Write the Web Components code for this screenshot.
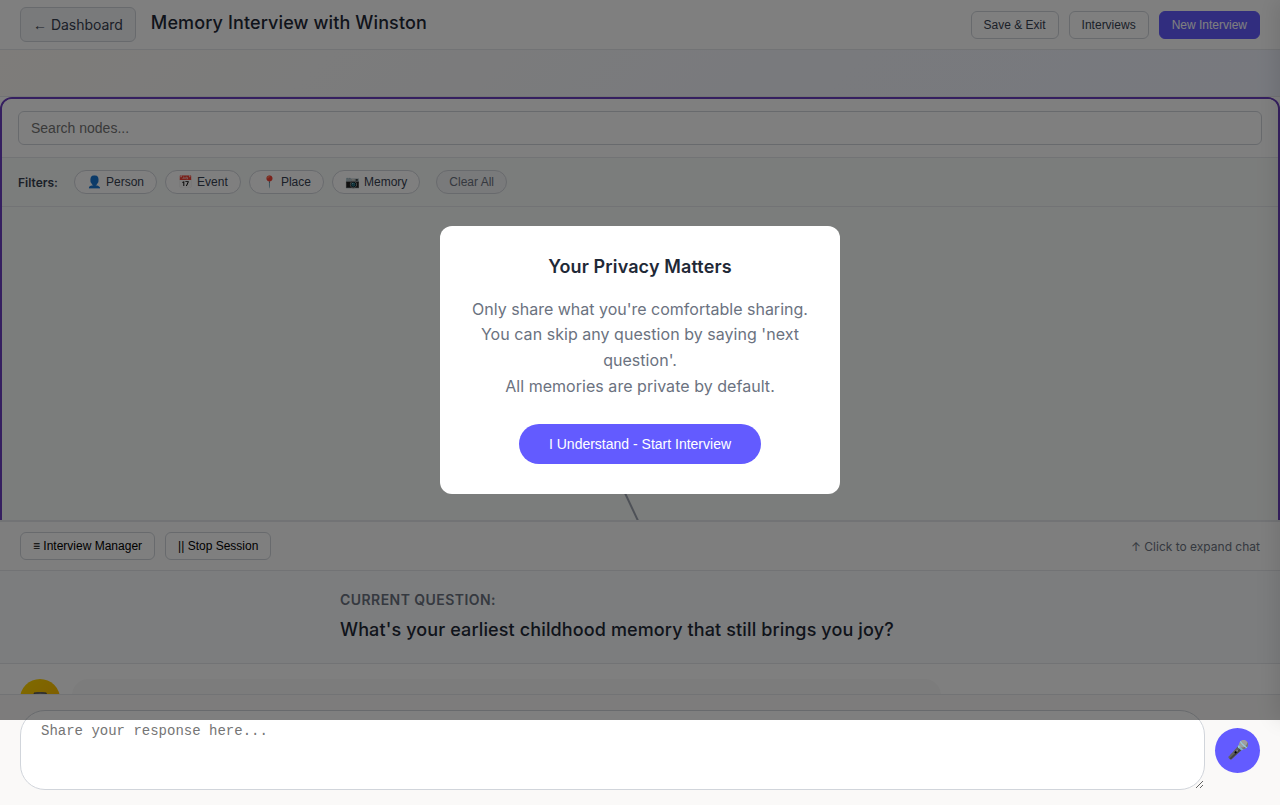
<!DOCTYPE html>
<html lang="en">
<head>
<meta charset="utf-8">
<title>Memory Interview</title>
<style>
html,body{margin:0;padding:0;height:805px;overflow:hidden;background:#faf9f7;font-family:Inter,"Liberation Sans",sans-serif}
</style>
</head>
<body>
<interview-app></interview-app>
<script>
const define = (name, html) => customElements.define(name, class extends HTMLElement {
  constructor() {
    super();
    const t = document.createElement('template');
    t.innerHTML = html;
    this.attachShadow({ mode: 'open' }).append(t.content.cloneNode(true));
  }
});

define('ui-button', `<style>
:host{display:block;flex:none}
button{display:block;box-sizing:border-box;height:28px;margin:0;padding:0 12px;font:12px/14px "Liberation Sans",Arial,sans-serif;color:#374151;background:#fff;border:1px solid #d1d5db;border-radius:6px;white-space:nowrap}
:host([variant=primary]) button{background:#635bff;border-color:#635bff;color:#fff}
:host([variant=plain]) button{color:#000}
:host([variant=back]) button{height:35px;font:14px/17px Inter,"Liberation Sans",sans-serif;letter-spacing:-.03px;background:#f3f4f6}
:host([variant=chip]) button{height:24px;border-radius:12px}
:host([variant=clear]) button{height:24px;border-radius:12px;background:#f3f4f6;color:#6b7280}
:host([variant=pill]) button{height:40px;padding:0 30px;border:0;border-radius:20px;font-size:14px;line-height:16px;background:#635bff;color:#fff}
</style><button><slot></slot></button>`);

define('app-header', `<style>
:host{display:flex;box-sizing:border-box;height:50px;padding:0 20px;align-items:center;justify-content:space-between;background:#fff;border-bottom:1px solid #e5e7eb}
.side{display:flex;gap:10px;align-items:center}
.left{gap:15px}
.arrow{font-family:"Liberation Sans",Arial,sans-serif}
h1{margin:0 0 4px;font-size:18px;line-height:22px;font-weight:500;letter-spacing:.12px;color:#1f2937}
</style>
<div class="side left"><ui-button variant="back"><span class="arrow">←</span> Dashboard</ui-button><h1>Memory Interview with Winston</h1></div>
<div class="side"><ui-button>Save &amp; Exit</ui-button><ui-button>Interviews</ui-button><ui-button variant="primary">New Interview</ui-button></div>`);

define('timeline-strip', `<style>
:host{display:block;box-sizing:border-box;height:47px;border-bottom:1px solid #e5e7eb;background:linear-gradient(135deg,#fcf9f4 0%,#f8f8f8 25%,#f2f4fb 65%,#f0f3fd 100%)}
</style>`);

define('memory-graph', `<style>
:host{display:block;height:423px;overflow:hidden;background:#fff}
.frame{box-sizing:border-box;height:600px;border:2px solid #6b3fc0;border-radius:12px;overflow:hidden;background:#f7faf8}
.search{padding:12px 16px;background:#fff;border-bottom:1px solid #e5e7eb}
input{display:block;box-sizing:border-box;width:100%;height:34px;padding:0 12px;border:1px solid #d1d5db;border-radius:6px;font:14px "Liberation Sans",Arial,sans-serif;background:#fff}
.filters{display:flex;align-items:center;gap:8px;padding:12px 16px;border-bottom:1px solid #e5e7eb}
b{font-size:12px;line-height:15px;font-weight:600;color:#374151;margin:0 8px 0 0}
i{font-style:normal;margin-right:.75px}
.last{margin-left:8px}
svg{display:block;width:100%;height:390px}
</style>
<div class="frame">
<div class="search"><input placeholder="Search nodes..."></div>
<div class="filters"><b>Filters:</b><ui-button variant="chip"><i>👤</i> Person</ui-button><ui-button variant="chip"><i>📅</i> Event</ui-button><ui-button variant="chip"><i>📍</i> Place</ui-button><ui-button variant="chip"><i>📷</i> Memory</ui-button><ui-button class="last" variant="clear">Clear All</ui-button></div>
<svg viewBox="0 0 1276 390" preserveAspectRatio="none"><path d="M614 267 L654.5 353" stroke="#9ca3af" stroke-width="2"/></svg>
</div>`);

define('chat-controls', `<style>
:host{display:flex;box-sizing:border-box;height:51px;padding:0 20px;align-items:center;gap:10px;background:#fdfdfd;border-top:2px solid #e5e7eb;border-bottom:1px solid #e5e7eb}
span{margin-left:auto;font-size:12px;line-height:15px;color:#6b7280}
</style>
<ui-button variant="plain">≡ Interview Manager</ui-button><ui-button variant="plain">|| Stop Session</ui-button><span>↑ Click to expand chat</span>`);

define('current-question', `<style>
:host{display:block;box-sizing:border-box;height:93px;padding-top:20px;background:#f8fafc;border-bottom:1px solid #e5e7eb}
div{width:600px;margin:0 auto}
h2{margin:0 0 10px;font-size:14px;line-height:18px;font-weight:600;letter-spacing:.44px;text-transform:uppercase;color:#6b7280}
p{margin:0;font-size:18px;line-height:22px;font-weight:500;letter-spacing:.12px;color:#1f2937}
</style><div><h2>Current Question:</h2><p>What's your earliest childhood memory that still brings you joy?</p></div>`);

define('chat-messages', `<style>
:host{display:flex;box-sizing:border-box;height:30px;padding:15px 20px 0;gap:12px;overflow:hidden;background:#fff}
.avatar{flex:none;display:grid;place-items:center;box-sizing:border-box;width:40px;height:40px;padding-top:2px;border-radius:50%;background:linear-gradient(135deg,#ffd700,#ffb300);font-size:18px;line-height:22px}
.bubble{width:869px;height:60px;border-radius:16px;background:#f9f9f9}
</style><div class="avatar">🎩</div><div class="bubble"></div>`);

define('chat-input', `<style>
:host{display:flex;box-sizing:border-box;height:111px;padding:15px 20px;gap:10px;align-items:center;background:#faf9f8;border-top:1px solid #e5e7eb}
textarea{display:block;box-sizing:border-box;flex:1;height:80px;margin:0;padding:12px 20px;border:1px solid #d1d5db;border-radius:25px;background:#fff;font:14px "Liberation Mono",monospace;resize:vertical}
button{flex:none;width:45px;height:45px;padding:0;border:0;border-radius:50%;background:#635bff;font:18px "Liberation Sans",Arial,sans-serif}
</style><textarea placeholder="Share your response here..."></textarea><button aria-label="Record">🎤</button>`);

define('side-drawer', `<style>
:host{position:absolute;left:1280px;top:0;width:400px;height:720px;box-shadow:-4px 0 20px rgba(0,0,0,.1)}
</style>`);

define('privacy-modal', `<style>
:host{position:absolute;left:0;top:0;width:100%;height:720px;display:flex;align-items:center;justify-content:center;background:rgba(0,0,0,.5)}
section{display:flex;flex-direction:column;align-items:center;box-sizing:border-box;width:400px;height:268px;padding:30px;border-radius:12px;background:#fff;text-align:center}
h2{margin:0 0 18.8px;font-size:18px;line-height:22px;font-weight:600;letter-spacing:.12px;color:#1f2937}
p{margin:0 0 24.8px;font-size:16px;line-height:25.6px;color:#6b7280}
span{letter-spacing:.04px}
</style>
<section><h2>Your Privacy Matters</h2><p>Only share what you're comfortable sharing.<br><span>You can skip any question by saying 'next question'.<br>All memories are private by default.</span></p><ui-button variant="pill">I Understand - Start Interview</ui-button></section>`);

define('interview-app', `<style>
:host{display:block;position:relative;width:1280px;height:805px;overflow:hidden}
</style>
<app-header></app-header><timeline-strip></timeline-strip><memory-graph></memory-graph>
<chat-controls></chat-controls><current-question></current-question><chat-messages></chat-messages><chat-input></chat-input>
<side-drawer></side-drawer><privacy-modal></privacy-modal>`);
</script>
</body>
</html>
